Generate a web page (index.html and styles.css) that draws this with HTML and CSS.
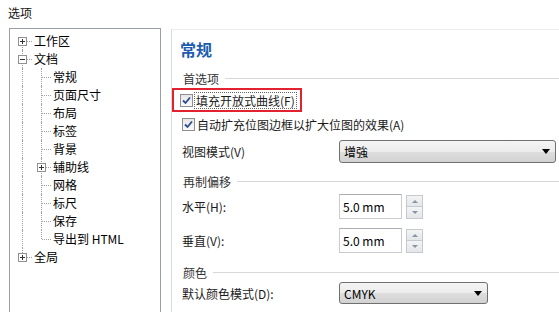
FILE: index.html
```html
<!DOCTYPE html>
<html>
<head>
  <meta charset="UTF-8">
  <title>选项</title>
  <link rel="stylesheet" href="styles.css">
</head>
<body>
  <div class="window">
    <div class="title">选项</div>
    <div class="main">
      <!-- left tree -->
      <div class="tree">
        <div class="row">
          <span class="cell down"><span class="box plus"></span></span>
          <span class="label">工作区</span>
        </div>
        <div class="row">
          <span class="cell both"><span class="box minus"></span></span>
          <span class="label">文档</span>
        </div>
        <div class="row">
          <span class="cell v"></span><span class="cell t"></span>
          <span class="label">常规</span>
        </div>
        <div class="row">
          <span class="cell v"></span><span class="cell t"></span>
          <span class="label">页面尺寸</span>
        </div>
        <div class="row">
          <span class="cell v"></span><span class="cell t"></span>
          <span class="label">布局</span>
        </div>
        <div class="row">
          <span class="cell v"></span><span class="cell t"></span>
          <span class="label">标签</span>
        </div>
        <div class="row">
          <span class="cell v"></span><span class="cell t"></span>
          <span class="label">背景</span>
        </div>
        <div class="row">
          <span class="cell v"></span><span class="cell t"><span class="box plus"></span></span>
          <span class="label">辅助线</span>
        </div>
        <div class="row">
          <span class="cell v"></span><span class="cell t"></span>
          <span class="label">网格</span>
        </div>
        <div class="row">
          <span class="cell v"></span><span class="cell t"></span>
          <span class="label">标尺</span>
        </div>
        <div class="row">
          <span class="cell v"></span><span class="cell t"></span>
          <span class="label">保存</span>
        </div>
        <div class="row">
          <span class="cell v"></span><span class="cell l"></span>
          <span class="label">导出到 HTML</span>
        </div>
        <div class="row">
          <span class="cell up"><span class="box plus"></span></span>
          <span class="label">全局</span>
        </div>
      </div>

      <!-- right page -->
      <div class="page">
        <div class="heading">常规</div>

        <div class="group">
          <span>首选项</span><span class="rule"></span>
        </div>
        <div class="check-row marked">
          <span class="checkbox"><svg width="9" height="9" viewBox="0 0 9 9"><path d="M1 4.5 L3.5 7 L8 1.5" fill="none" stroke="#2a4d8f" stroke-width="1.8"/></svg></span>
          <span class="focus">填充开放式曲线(F)</span>
        </div>
        <div class="check-row">
          <span class="checkbox"><svg width="9" height="9" viewBox="0 0 9 9"><path d="M1 4.5 L3.5 7 L8 1.5" fill="none" stroke="#2a4d8f" stroke-width="1.8"/></svg></span>
          <span>自动扩充位图边框以扩大位图的效果(A)</span>
        </div>

        <div class="field view-mode">
          <span class="field-label">视图模式(V)</span>
          <div class="select wide"><span>增強</span><span class="arrow"></span></div>
        </div>

        <div class="group offset">
          <span>再制偏移</span><span class="rule"></span>
        </div>
        <div class="field spin-row">
          <span class="field-label">水平(H):</span>
          <div class="spin">
            <div class="spin-input">5.0 mm</div>
            <div class="spin-btns"><span class="up-btn"></span><span class="down-btn"></span></div>
          </div>
        </div>
        <div class="field spin-row second">
          <span class="field-label">垂直(V):</span>
          <div class="spin">
            <div class="spin-input">5.0 mm</div>
            <div class="spin-btns"><span class="up-btn"></span><span class="down-btn"></span></div>
          </div>
        </div>

        <div class="group color">
          <span>颜色</span><span class="rule"></span>
        </div>
        <div class="field color-mode">
          <span class="field-label">默认颜色模式(D):</span>
          <div class="select narrow"><span>CMYK</span><span class="arrow"></span></div>
        </div>
      </div>
    </div>
  </div>
</body>
</html>
```

FILE: styles.css
```css
body {
  margin: 0;
  font-family: "Noto Sans CJK SC", "Liberation Sans", sans-serif;
  font-size: 12px;
  color: #1a1a1a;
  background-color: #fff;
  overflow: hidden;
}
.window {
  width: 559px;
  height: 312px;
  overflow: hidden;
}
.title {
  height: 28px;
  line-height: 25px;
  padding-left: 8px;
  color: #111;
}
.main {
  display: flex;
  padding-left: 9px;
  gap: 10px;
}

/* tree */
.tree {
  width: 152px;
  height: 300px;
  box-sizing: border-box;
  border: 1px solid #9a9ea6;
  padding: 3px 0 0 3px;
  flex: none;
}
.row {
  display: flex;
  align-items: center;
  height: 18px;
}
.label {
  margin-left: 2px;
  line-height: 18px;
  color: #000;
  white-space: nowrap;
}
.cell {
  position: relative;
  width: 19px;
  height: 18px;
  flex: none;
}
.cell::before,
.cell::after {
  content: '';
  position: absolute;
}
.cell.v::before,
.cell.t::before,
.cell.both::before {
  left: 9px;
  top: 0;
  bottom: 0;
  border-left: 1px dotted #a0a0a0;
}
.cell.l::before,
.cell.up::before {
  left: 9px;
  top: 0;
  height: 9px;
  border-left: 1px dotted #a0a0a0;
}
.cell.down::before {
  left: 9px;
  top: 9px;
  bottom: 0;
  border-left: 1px dotted #a0a0a0;
}
.cell.t::after,
.cell.l::after,
.cell.up::after,
.cell.down::after,
.cell.both::after {
  left: 10px;
  top: 9px;
  width: 9px;
  border-top: 1px dotted #a0a0a0;
}
.box {
  position: absolute;
  left: 5px;
  top: 5px;
  width: 9px;
  height: 9px;
  box-sizing: border-box;
  border: 1px solid #919191;
  background: #fff;
  z-index: 1;
}
.box::before,
.box::after {
  content: '';
  position: absolute;
  background: #333;
}
.box::before {
  left: 1px;
  top: 3px;
  width: 5px;
  height: 1px;
}
.box.plus::after {
  left: 3px;
  top: 1px;
  width: 1px;
  height: 5px;
}

/* page */
.page {
  flex: 1;
  height: 300px;
  margin-top: 1px;
  border-left: 1px solid #d9d9d9;
  border-top: 1px solid #ececec;
  padding: 7px 0 0 8px;
}
.heading {
  height: 24px;
  line-height: 24px;
  font-size: 16px;
  font-weight: bold;
  color: #1d5cae;
}
.group {
  display: flex;
  align-items: center;
  height: 18px;
  margin-top: 8px;
  padding-left: 3px;
  color: #333;
}
.group.offset {
  margin-top: 9px;
}
.group.color {
  margin-top: 10px;
}
.rule {
  flex: 1;
  height: 1px;
  background: #d8d8d8;
  margin-left: 6px;
}
.check-row {
  display: flex;
  align-items: center;
  height: 22px;
  padding-left: 2px;
}
.check-row.marked {
  display: inline-flex;
  height: 20px;
  margin: 1px 0 1px -8px;
  padding: 0 4px 0 6px;
  border: 2px solid #e2222e;
}
.checkbox {
  width: 13px;
  height: 13px;
  box-sizing: border-box;
  border: 1px solid #8e8f8f;
  background: linear-gradient(#e6e6e6, #fafafa);
  display: flex;
  align-items: center;
  justify-content: center;
  margin-right: 2px;
  flex: none;
}
.focus {
  outline: 1px dotted #666;
  line-height: 15px;
  padding: 0 1px;
}
.field {
  display: flex;
  align-items: center;
  padding-left: 2px;
}
.field-label {
  width: 157px;
  flex: none;
}
.view-mode {
  height: 23px;
  margin-top: 5px;
}
.select {
  display: flex;
  align-items: center;
  justify-content: space-between;
  box-sizing: border-box;
  height: 23px;
  padding: 0 5px 0 4px;
  border: 1px solid #707070;
  border-radius: 3px;
  background: linear-gradient(#f4f4f4 0%, #ececec 50%, #dedede 51%, #d2d2d2 100%);
  color: #000;
}
.select.wide {
  width: 217px;
}
.select.narrow {
  width: 149px;
  height: 22px;
}
.arrow {
  width: 0;
  height: 0;
  border-left: 4px solid transparent;
  border-right: 4px solid transparent;
  border-top: 5px solid #000;
}
.spin-row {
  height: 25px;
  margin-top: 4px;
}
.spin-row.second {
  margin-top: 9px;
}
.spin {
  display: flex;
  align-items: center;
  gap: 4px;
}
.spin-input {
  width: 63px;
  height: 25px;
  box-sizing: border-box;
  border: 1px solid #c9cbd0;
  border-top-color: #abadb3;
  padding-left: 3px;
  line-height: 23px;
  color: #000;
}
.spin-btns {
  display: flex;
  flex-direction: column;
  width: 17px;
  height: 24px;
  box-sizing: border-box;
  border: 1px solid #c5c9d0;
}
.up-btn,
.down-btn {
  flex: 1;
  position: relative;
  background: linear-gradient(#f4f4f4, #e4e6ea);
}
.up-btn {
  border-bottom: 1px solid #c5c9d0;
}
.up-btn::after,
.down-btn::after {
  content: '';
  position: absolute;
  left: 5px;
  top: 4px;
  border-left: 3px solid transparent;
  border-right: 3px solid transparent;
}
.up-btn::after {
  border-bottom: 3px solid #8a93a6;
}
.down-btn::after {
  border-top: 3px solid #8a93a6;
}
.color-mode {
  height: 22px;
  margin-top: 1px;
}
```
